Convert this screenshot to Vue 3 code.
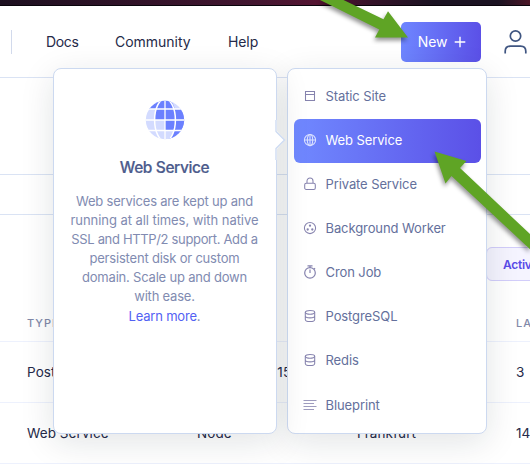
<script setup>
const services = [
  { name: 'Static Site', icon: 'window' },
  { name: 'Web Service', icon: 'globe', active: true },
  { name: 'Private Service', icon: 'lock' },
  { name: 'Background Worker', icon: 'worker' },
  { name: 'Cron Job', icon: 'timer' },
  { name: 'PostgreSQL', icon: 'db' },
  { name: 'Redis', icon: 'db' },
  { name: 'Blueprint', icon: 'lines' },
]
const rows = [
  ['PostgreSQL', 'PostgreSQL 15', 'Frankfurt', '3'],
  ['Web Service', 'Node', 'Frankfurt', '14'],
]
</script>

<template>
  <div class="page">
    <div class="strip"></div>
    <header class="header">
      <span class="divider"></span>
      <nav class="nav">
        <a class="docs">Docs</a>
        <a class="community">Community</a>
        <a class="help">Help</a>
      </nav>
      <button class="new">
        <span>New</span>
        <svg width="12" height="12" viewBox="0 0 12 12"><path d="M6 .7v10.6M.7 6h10.6" stroke="#fff" stroke-width="1.4" /></svg>
      </button>
      <svg class="user" width="24" height="26" viewBox="0 0 24 26" fill="none" stroke="#3f5581" stroke-width="1.7">
        <circle cx="11.500" cy="7" r="5.200" />
        <path d="M1.200 24.500v-2.200c0-3.300 2-5.200 5.200-5.200h10.200c3.200 0 5.200 1.900 5.200 5.200v2.200" />
      </svg>
    </header>
    <div class="title-space"></div>
    <div class="tab-space"></div>
    <div class="filters"><button class="filter">Activ</button></div>
    <div class="grid head"><span></span><span>TYPE</span><span></span><span></span><span>LA</span></div>
    <div v-for="row in rows" :key="row[0]" class="grid row">
      <span></span><span v-for="cell in row" :key="cell">{{ cell }}</span>
    </div>

    <section class="panel info">
      <svg class="big-globe" width="40" height="40" viewBox="0 0 40 40">
        <defs><clipPath id="ball"><circle cx="20" cy="20" r="19.200" /></clipPath></defs>
        <g clip-path="url(#ball)">
          <path d="M0 0h40v40H0z" fill="#d3dbff" />
          <path d="M0 0h20v9H0zM20 0h5q4 4 4.500 9H20zM10 9h19.500v11H10zM20 20h20v10.500H20zM29.500 9H40v11H29.500zM29 30h11V40H22q6-4 7.500-10z" fill="#6b80ff" />
          <path d="M0 9h40M0 20h40M0 30.500h40M20 0v40" stroke="#fff" stroke-width="1.300" />
          <ellipse cx="20" cy="20" rx="10.400" ry="21" fill="none" stroke="#fff" stroke-width="1.500" />
        </g>
      </svg>
      <h2>Web Service</h2>
      <p>
        <span>Web services are kept up and</span>
        <span class="loose">running at all times, with native</span>
        <span class="tight">SSL and HTTP/2 support. Add a</span>
        <span>persistent disk or custom</span>
        <span>domain. Scale up and down</span>
        <span>with ease.</span>
        <span><a>Learn more</a>.</span>
      </p>
      <svg class="caret" width="11" height="40" viewBox="0 0 11 40">
        <path d="M0 0h2v11l8 9-8 9v11H0z" fill="#fff" />
        <path d="M1 0v11.500L9.500 20 1 28.500V40" fill="none" stroke="#cbd9f1" stroke-width="1.300" />
      </svg>
    </section>

    <ul class="panel menu">
      <li v-for="s in services" :key="s.name" :class="{ active: s.active }">
        <svg width="14" height="14" viewBox="0 0 14 14" fill="none" stroke="currentColor" stroke-width="1.050">
          <path v-if="s.icon === 'window'" d="M2.500 2.500h9v9h-9zM2.500 5.500h9" />
          <g v-else-if="s.icon === 'globe'"><circle cx="7" cy="7" r="5.600" /><ellipse cx="7" cy="7" rx="2.700" ry="5.600" /><path d="M1.400 7h11.200M7 1.400v11.200" /></g>
          <g v-else-if="s.icon === 'lock'"><rect x="1.700" y="6.200" width="10.600" height="6.200" rx="1.500" /><path d="M4 6V4a3 3 0 0 1 6 0V6" /></g>
          <g v-else-if="s.icon === 'worker'"><circle cx="7" cy="7" r="5.600" /><g fill="currentColor" stroke="none"><circle cx="7" cy="4.700" r="1.150" /><circle cx="4.700" cy="8.500" r="1.150" /><circle cx="9.300" cy="8.500" r="1.150" /></g></g>
          <g v-else-if="s.icon === 'timer'"><circle cx="7" cy="7.900" r="5.300" stroke-width="1.200" /><path d="M7 8V4.500M7 2.800V.9M4.500.9h5M11 3.300l1.100 1" stroke-width="1.200" /></g>
          <g v-else-if="s.icon === 'db'"><ellipse cx="7" cy="3.300" rx="4.700" ry="1.900" /><path d="M2.300 3.300v7.200c0 2.700 9.400 2.700 9.400 0V3.300M2.300 7c0 2.500 9.400 2.500 9.400 0" /></g>
          <path v-else d="M.5 2.500h13M.5 5.500h10.500M.5 8.500h13M.5 11.500h10.500" opacity=".8" />
        </svg>
        <span>{{ s.name }}</span>
      </li>
    </ul>

    <svg class="arrows" width="530" height="464" viewBox="0 0 530 464">
      <g fill="#5fa425">
        <path d="M319-.5h23.500L383.500 19.300 388 11.300 408 37.500H375L379.300 29.500z" />
        <path d="M434.500 151.500l32 9.500-6.500 7L540 243.500v15L451.500 176l-6 7.500z" />
      </g>
    </svg>
  </div>
</template>

<style>
body { margin: 0; overflow: hidden; }
</style>

<style scoped>
* { box-sizing: border-box; }
.page { position: relative; width: 530px; height: 464px; overflow: hidden; background: #fff; font-family: Inter, "Liberation Sans", sans-serif; font-size: 13px; color: #252a49; }
.strip { height: 6px; border-bottom: 1px solid #09030b; background: linear-gradient(90deg, #1d1020, #2e1227 22%, #431630 48%, #551532 60%, #351329 70%, #1b1322 82%, #1b1322 94%, #4b1627); }
.header { display: flex; align-items: center; height: 72px; border-bottom: 1px solid #dae3f4; padding-left: 11px; }
.divider { width: 1px; height: 24px; background: #d2daec; }
.nav { display: flex; width: 355px; margin-left: 34px; gap: 36px; font-size: 14px; line-height: 20px; }
.docs { width: 33px; letter-spacing: -.35px; }
.community { width: 77px; letter-spacing: -.03px; }
.help { letter-spacing: -.1px; }
.new { display: flex; align-items: center; justify-content: center; gap: 7px; width: 80px; height: 40px; border: 0; border-radius: 5px; background: linear-gradient(90deg, #6e86ff, #5b50e7); color: #fff; font: 400 14px Inter, sans-serif; letter-spacing: -.1px; padding: 0 0 0 2px; }
.user { margin-left: 23px; flex: none; }
.title-space { height: 97px; border-bottom: 1px solid #dae3f4; }
.tab-space { height: 40px; border-bottom: 1px solid #dae3f4; }
.filters { display: flex; padding: 32px 0 0 486px; height: 92px; }
.filter { width: 80px; height: 34px; flex: none; border: 1px solid #d2cdfa; border-radius: 6px; background: #f5f4ff; color: #594be8; font: 600 12px Inter, sans-serif; letter-spacing: -.3px; text-align: left; padding: 0 16px; white-space: nowrap; }
.grid { display: grid; grid-template-columns: 27px 170px 160px 159px 100px; align-items: center; border-bottom: 1px solid #edf1fd; white-space: nowrap; }
.head { height: 35px; padding-bottom: 2px; color: #8189a9; font-size: 11px; font-weight: 500; letter-spacing: 1px; }
.row { height: 61px; font-size: 13.500px; letter-spacing: .08px; }
.panel { position: absolute; top: 68px; height: 366px; margin: 0; background: #fff; border: 1px solid #ccd9f0; border-radius: 8px; box-shadow: 0 8px 34px rgba(20, 30, 40, .12); }
.info { left: 53px; width: 224px; display: flex; flex-direction: column; align-items: center; padding: 31px 1px 0 0; z-index: 2; }
.big-globe { flex: none; margin-left: 1px; }
.info h2 { margin: 18px 0 0; font-size: 15.500px; line-height: 20px; font-weight: 500; color: #4c5b8c; letter-spacing: -.4px; -webkit-text-stroke: .2px #4c5b8c; }
.info p { margin: 14px 0 0; color: #818bb1; font-size: 13px; line-height: 19.100px; text-align: center; white-space: nowrap; }
.info p span { display: block; letter-spacing: -.2px; }
.info p .loose { letter-spacing: -.06px; }
.info p .tight { letter-spacing: -.34px; }
.info a { color: #5261f3; }
.caret { position: absolute; left: 221px; top: 51px; }
.menu { left: 287px; width: 200px; list-style: none; padding: 6px 5px 6px 6px; z-index: 1; }
.menu li { display: flex; align-items: center; gap: 8.500px; height: 44px; padding: 0 0 2px 9px; border-radius: 6px; color: #8683ae; }
.menu li span { color: #64709c; font-size: 13px; line-height: 16px; letter-spacing: -.1px; }
.menu li:last-child { padding-bottom: 0; }
.menu li.active { background: linear-gradient(90deg, #7089ff, #5b50e7); color: #dce3ff; }
.menu li.active span { color: #fff; }
.arrows { position: absolute; inset: 0; z-index: 3; filter: drop-shadow(-1px 3px 2px rgba(0, 0, 0, .42)); }
</style>
